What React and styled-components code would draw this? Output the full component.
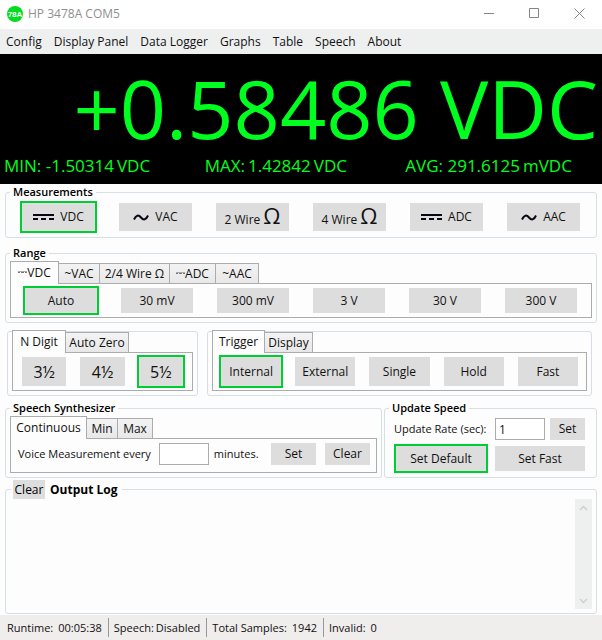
import React, { useState } from "react";
import styled, { createGlobalStyle, css } from "styled-components";

const GREEN = "#00cc33";
const LCD = "#00ff1e";

const GlobalStyle = createGlobalStyle`
  * { box-sizing: border-box; }
  body {
    margin: 0;
    background: #fdfdfd;
    color: #111;
    font: 12px/16px "Open Sans", "Noto Sans", sans-serif;
  }
  button, input { font: inherit; color: inherit; }
`;

const Window = styled.div`
  display: flex;
  flex-direction: column;
  min-height: 100vh;
`;

const TitleBar = styled.header`
  display: flex;
  align-items: center;
  height: 29px;
  padding: 0 0 2px 7px;
  color: #8f8f8f;
  background: #fff;
`;

const Title = styled.h1`
  flex: 1;
  margin: 0 0 0 5px;
  font-size: 12px;
  font-weight: 400;
`;

const Caption = styled.button`
  display: grid;
  place-items: center;
  width: 45px;
  height: 27px;
  padding: 0;
  border: 0;
  background: none;
  color: #858585;
`;

const MenuBar = styled.nav`
  display: flex;
  align-items: center;
  height: 25px;
  background: #eef0f0;
`;

const MenuItem = styled.button`
  padding: 0 6px;
  border: 0;
  background: none;
  white-space: nowrap;
`;

const Readout = styled.section`
  height: 130px;
  padding-top: 6px;
  background: #000;
  color: ${LCD};
`;

const Reading = styled.div`
  padding-right: 4px;
  text-align: right;
  font-size: 81px;
  line-height: 96px;
  white-space: nowrap;
`;

const Stats = styled.div`
  display: grid;
  grid-template-columns: repeat(3, 1fr);
  font-size: 17px;
  line-height: 20px;
  white-space: nowrap;
`;

const Stat = styled.span`
  display: flex;
  gap: 3px;
  padding-left: 4px;
`;

const Main = styled.main`
  flex: 1;
  display: flex;
  flex-direction: column;
  padding: 1px 5px;
`;

const Group = styled.fieldset`
  min-width: 0;
  margin: 0;
  padding: ${(p) => (p.$titled ? 3 : 0)}px 4px 4px;
  border: 1px solid #d5dfe5;
  border-radius: 3px;
`;

const MeasurementsGroup = styled(Group)`
  padding: 0 4px 2px;
  margin-bottom: 8px;
`;

const Legend = styled.legend`
  padding: 0 3px;
  font-size: 11px;
  font-weight: 600;
  line-height: 14px;
  color: #000;
`;

const MiddleRow = styled.div`
  display: grid;
  grid-template-columns: 191fr 385fr;
  gap: 9px;
  margin: 8px 5px 5px 2px;
`;

const LowerRow = styled.div`
  display: grid;
  grid-template-columns: 377fr 213fr;
  gap: 2px;
`;

const ButtonGrid = styled.div`
  display: grid;
  grid-template-columns: repeat(${(p) => p.$columns}, 1fr);
  column-gap: ${(p) => p.$gap}px;
  padding: 4px ${(p) => p.$inset}px;
`;

const Button = styled.button`
  display: flex;
  align-items: center;
  justify-content: center;
  gap: ${(p) => p.$gap || 0}px;
  flex: none;
  width: ${(p) => (p.$width ? p.$width + "px" : "auto")};
  min-width: 0;
  height: ${(p) => p.$height || 22}px;
  padding: 0;
  border: 0;
  background: #ddd;
  white-space: nowrap;
  font-size: ${(p) => (p.$large ? 16 : 12)}px;
  font-weight: 400;
  ${(p) =>
    p["aria-pressed"] &&
    css`
      box-shadow: 0 0 0 2px ${GREEN};
    `}
`;

const Omega = styled.span`
  font-size: 22px;
  line-height: 24px;
`;

const OhmLabel = styled.span`
  display: flex;
  align-items: baseline;
  gap: 3px;
  padding-bottom: 4px;
`;

const TabList = styled.div`
  display: flex;
  align-items: flex-end;
  height: 20px;
`;

const Tab = styled.button`
  display: flex;
  align-items: center;
  justify-content: center;
  width: ${(p) => p.$width}px;
  height: 20px;
  padding: 0;
  border: 1px solid #acacac;
  border-bottom: 0;
  background: linear-gradient(#f3f3f3, #e8e8e8);
  white-space: nowrap;
  & + & {
    margin-left: -1px;
  }
  &[aria-selected="true"] {
    z-index: 1;
    height: 23px;
    margin: -2px 0 -1px;
    padding-bottom: 1px;
    background: #fdfdfd;
  }
`;

const TabPanel = styled.div`
  border: 1px solid #acacac;
`;

const VoiceRow = styled.div`
  display: flex;
  align-items: center;
  padding: 4px 6px 7px 7px;
`;

const FieldLabel = styled.label`
  font-size: 11px;
  white-space: nowrap;
`;

const Spacer = styled.span`
  flex: 1;
`;

const Field = styled.input`
  flex: none;
  width: 50px;
  height: 22px;
  margin: 0 5px;
  padding: 0 3px;
  border: 1px solid #acacac;
  border-radius: 0;
  background: #fff;
`;

const MinutesField = styled(Field)`
  margin: 0 5px 0 8px;
`;

const ClearButton = styled(Button)`
  margin-left: 9px;
`;

const UpdateBody = styled.div`
  display: grid;
  gap: 6px;
  padding: 0 7px 2px 5px;
`;

const UpdateRow = styled.div`
  display: flex;
  align-items: center;
  justify-content: space-between;
  padding-left: ${(p) => (p.$inset ? 2 : 0)}px;
`;

const LogGroup = styled(Group)`
  flex: 1;
  margin-top: 2px;
`;

const LogLegend = styled.legend`
  display: flex;
  align-items: center;
  gap: 5px;
  margin-left: 1px;
  padding: 0 5px 0 2px;
  font-weight: 700;
  color: #000;
`;

const LogBody = styled.div`
  display: flex;
  height: 100%;
  min-height: 110px;
`;

const Log = styled.div`
  flex: 1;
`;

const ScrollTrack = styled.div`
  display: flex;
  flex-direction: column;
  justify-content: space-between;
  align-items: center;
  width: 17px;
  padding: 6px 0 5px;
  background: #eef0f0;
  color: #cdcfcf;
`;

const StatusBar = styled.footer`
  display: flex;
  align-items: center;
  height: 25px;
  padding: 0 2px;
  background: #f0eded;
  font-size: 11px;
  line-height: 19px;
  white-space: nowrap;
`;

const StatusItem = styled.span`
  display: flex;
  gap: ${(p) => p.$gap}px;
  padding: 0 6px 0 5px;
  & + & {
    border-left: 1px solid #999;
  }
`;

const Logo = () => (
  <svg width="16" height="16" viewBox="0 0 16 16" aria-hidden="true">
    <circle cx="8" cy="8" r="8" fill="#00dc1e" />
    <text x="8" y="11" textAnchor="middle" fontSize="8" fontWeight="700" fontFamily="Liberation Sans, sans-serif" fill="#fff">
      78A
    </text>
  </svg>
);

const DcIcon = () => (
  <svg width="21" height="6" viewBox="0 0 21 6" fill="#0c0614" aria-hidden="true">
    <path d="M0 0h21v2H0zM0 4h5v2H0zM8 4h5v2H8zM16 4h5v2h-5z" />
  </svg>
);

const AcIcon = () => (
  <svg width="16" height="7" viewBox="0 0 16 7" fill="none" stroke="#0c0614" strokeWidth="2" aria-hidden="true">
    <path d="M1 5.500C3 1 5.500 .5 8 3.500S13 6 15 1.500" />
  </svg>
);

const SmallDcIcon = () => (
  <svg width="9" height="4" viewBox="0 0 9 4" aria-hidden="true">
    <path d="M0 0h9v1H0z" fill="#aaa" />
    <path d="M0 1h2v1H0zM3 1h3v1H3zM7 1h2v1H7z" fill="#777" />
  </svg>
);

const Chevron = ({ d }) => (
  <svg width="9" height="6" viewBox="0 0 9 6" fill="none" stroke="currentColor" strokeWidth="1.500" aria-hidden="true">
    <path d={d} />
  </svg>
);

const Ohm = ({ wires }) => (
  <OhmLabel>
    {wires} Wire <Omega>Ω</Omega>
  </OhmLabel>
);

const MENU = ["Config", "Display Panel", "Data Logger", "Graphs", "Table", "Speech", "About"];

const MEASUREMENTS = [
  { id: "vdc", label: <><DcIcon />VDC</> },
  { id: "vac", label: <><AcIcon />VAC</> },
  { id: "2w", label: <Ohm wires={2} /> },
  { id: "4w", label: <Ohm wires={4} /> },
  { id: "adc", label: <><DcIcon />ADC</> },
  { id: "aac", label: <><AcIcon />AAC</> },
];

const plain = (labels) => labels.map((label) => ({ id: label, label }));

const RANGES = plain(["Auto", "30 mV", "300 mV", "3 V", "30 V", "300 V"]);
const DIGITS = plain(["3½", "4½", "5½"]);
const TRIGGERS = plain(["Internal", "External", "Single", "Hold", "Fast"]);

function Choices({ options, initial, gap, inset, height, iconGap, large }) {
  const [active, setActive] = useState(initial);
  return (
    <ButtonGrid $columns={options.length} $gap={gap} $inset={inset}>
      {options.map(({ id, label }) => (
        <Button
          key={id}
          $height={height}
          $gap={iconGap}
          $large={large}
          aria-pressed={active === id}
          onClick={() => setActive(id)}
        >
          {label}
        </Button>
      ))}
    </ButtonGrid>
  );
}

function Tabs({ label, tabs, children }) {
  return (
    <div>
      <TabList role="tablist" aria-label={label}>
        {tabs.map(([text, width, icon], i) => (
          <Tab key={text} role="tab" aria-selected={i === 0} $width={width}>
            {icon}
            {text}
          </Tab>
        ))}
      </TabList>
      <TabPanel role="tabpanel">{children}</TabPanel>
    </div>
  );
}

export default function App() {
  const [rate, setRate] = useState("1");
  const [minutes, setMinutes] = useState("");
  const [speed, setSpeed] = useState("default");

  return (
    <Window>
      <GlobalStyle />
      <TitleBar>
        <Logo />
        <Title>HP 3478A COM5</Title>
        <Caption aria-label="Minimize">
          <svg width="11" height="11" stroke="currentColor"><path d="M0 5.500h10" /></svg>
        </Caption>
        <Caption aria-label="Maximize">
          <svg width="11" height="11" stroke="currentColor" fill="none"><path d="M.5 .5h9v9h-9z" /></svg>
        </Caption>
        <Caption aria-label="Close">
          <svg width="11" height="11" stroke="currentColor"><path d="M.5 .5l10 10M10.500 .5l-10 10" /></svg>
        </Caption>
      </TitleBar>

      <MenuBar>
        {MENU.map((item) => (
          <MenuItem key={item}>{item}</MenuItem>
        ))}
      </MenuBar>

      <Readout>
        <Reading>+0.58486 VDC</Reading>
        <Stats>
          <Stat><span>MIN: -1.50314</span><span>VDC</span></Stat>
          <Stat><span>MAX:</span><span>1.42842</span><span>VDC</span></Stat>
          <Stat><span>AVG: 291.6125</span><span>mVDC</span></Stat>
        </Stats>
      </Readout>

      <Main>
        <MeasurementsGroup>
          <Legend>Measurements</Legend>
          <Choices options={MEASUREMENTS} initial="vdc" gap={24} inset={12} height={28} iconGap={6} />
        </MeasurementsGroup>

        <Group $titled>
          <Legend>Range</Legend>
          <Tabs
            label="Range"
            tabs={[
              ["VDC", 49, <SmallDcIcon key="i" />],
              ["~VAC", 42],
              ["2/4 Wire Ω", 71],
              ["ADC", 47, <SmallDcIcon key="i" />],
              ["~AAC", 44],
            ]}
          >
            <Choices options={RANGES} initial="Auto" gap={24} inset={14} height={25} />
          </Tabs>
        </Group>

        <MiddleRow>
          <Group>
            <Tabs label="Digits" tabs={[["N Digit", 54], ["Auto Zero", 64]]}>
              <Choices options={DIGITS} initial="5½" gap={14} inset={9} height={29} large />
            </Tabs>
          </Group>
          <Group>
            <Tabs label="Trigger" tabs={[["Trigger", 53], ["Display", 49]]}>
              <Choices options={TRIGGERS} initial="Internal" gap={14} inset={8} height={29} />
            </Tabs>
          </Group>
        </MiddleRow>

        <LowerRow>
          <Group $titled>
            <Legend>Speech Synthesizer</Legend>
            <Tabs label="Speech" tabs={[["Continuous", 77], ["Min", 32], ["Max", 36]]}>
              <VoiceRow>
                <FieldLabel htmlFor="minutes">Voice Measurement every</FieldLabel>
                <MinutesField id="minutes" value={minutes} onChange={(e) => setMinutes(e.target.value)} />
                <FieldLabel htmlFor="minutes">minutes.</FieldLabel>
                <Spacer />
                <Button $width={45}>Set</Button>
                <ClearButton $width={45}>Clear</ClearButton>
              </VoiceRow>
            </Tabs>
          </Group>
          <Group $titled>
            <Legend>Update Speed</Legend>
            <UpdateBody>
              <UpdateRow>
                <FieldLabel htmlFor="rate">Update Rate (sec):</FieldLabel>
                <Spacer />
                <Field id="rate" value={rate} onChange={(e) => setRate(e.target.value)} />
                <Button $width={35}>Set</Button>
              </UpdateRow>
              <UpdateRow $inset>
                <Button $width={90} $height={25} aria-pressed={speed === "default"} onClick={() => setSpeed("default")}>
                  Set Default
                </Button>
                <Button $width={90} $height={25} aria-pressed={speed === "fast"} onClick={() => setSpeed("fast")}>
                  Set Fast
                </Button>
              </UpdateRow>
            </UpdateBody>
          </Group>
        </LowerRow>

        <LogGroup>
          <LogLegend>
            <Button $width={32} $height={19}>Clear</Button>
            Output Log
          </LogLegend>
          <LogBody>
            <Log role="log" />
            <ScrollTrack>
              <Chevron d="M1 5l3.500-3.500L8 5" />
              <Chevron d="M1 1l3.500 3.500L8 1" />
            </ScrollTrack>
          </LogBody>
        </LogGroup>
      </Main>

      <StatusBar>
        <StatusItem $gap={5}><span>Runtime:</span><span>00:05:38</span></StatusItem>
        <StatusItem $gap={2}><span>Speech:</span><span>Disabled</span></StatusItem>
        <StatusItem $gap={5}><span>Total Samples:</span><span>1942</span></StatusItem>
        <StatusItem $gap={5}><span>Invalid:</span><span>0</span></StatusItem>
      </StatusBar>
    </Window>
  );
}
